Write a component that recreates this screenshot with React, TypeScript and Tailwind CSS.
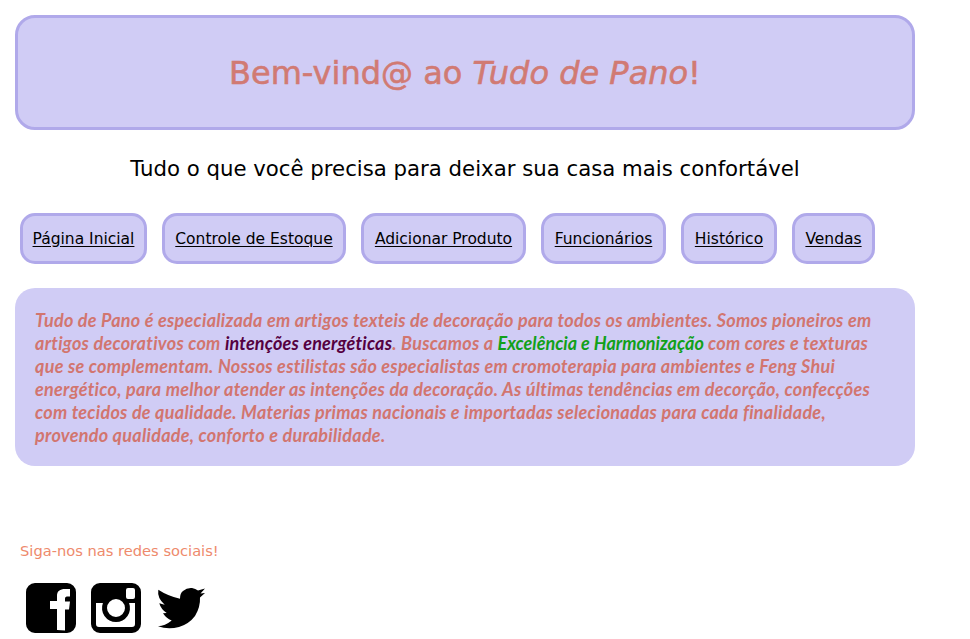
import React from "react";

const links = [
  { label: "Página Inicial", width: "w-[127px]" },
  { label: "Controle de Estoque", width: "w-[184px]" },
  { label: "Adicionar Produto", width: "w-[165px]" },
  { label: "Funcionários", width: "w-[125px]" },
  { label: "Histórico", width: "w-[96px]" },
  { label: "Vendas", width: "w-[83px]" },
];

const FacebookIcon = () => (
  <svg viewBox="0 0 50 50" className="w-[50px] h-[50px]">
    <path
      fillRule="evenodd"
      d="M9 0h32a9 9 0 0 1 9 9v32a9 9 0 0 1-9 9H9a9 9 0 0 1-9-9V9a9 9 0 0 1 9-9zM31 47V26h-7v-8h7v-5c0-5 3-7 8-7h5v7.500h-3c-1.500 0-2 1-2 2.500v2.500h5l-1 8h-4v21z"
    />
  </svg>
);

const InstagramIcon = () => (
  <svg viewBox="0 0 50 50" className="w-[50px] h-[50px]">
    <path
      fillRule="evenodd"
      d="M9 0h32a9 9 0 0 1 9 9v32a9 9 0 0 1-9 9H9a9 9 0 0 1-9-9V9a9 9 0 0 1 9-9zM37 5h5a2 2 0 0 1 2 2v7a2 2 0 0 1-2 2h-5a2 2 0 0 1-2-2V7a2 2 0 0 1 2-2zM5 20v21a3 3 0 0 0 3 3h33a3 3 0 0 0 3-3V20h-5.920A14 14 0 1 1 11.920 20zM25 16a9 9 0 1 0 0 18 9 9 0 1 0 0-18z"
    />
  </svg>
);

const TwitterIcon = () => (
  <svg viewBox="0 0 50 50" className="w-[50px] h-[50px]">
    <path d="M2.300 6.700Q12 13 24 15.700Q24 10 27 8Q31 4.500 36 5Q39.500 5.500 42 7.500L49 5.500L44.500 10.500L49 10L44 14.500Q44.500 24 39 33Q33 41 23 44Q12 47 2 43.300Q9 43 15.700 37.500Q10 35 7 30.200L10.700 30Q5 26.500 3.300 20.300L8.700 21.700Q1 15 2.300 6.700Z" />
  </svg>
);

export default function App() {
  return (
    <div className="bg-white min-h-[639px] overflow-hidden pt-[15px] pl-[15px] w-[915px] font-['DejaVu_Sans',sans-serif]">
      {/* HEADER */}
      <header className="h-[115px] flex items-center justify-center bg-[#d0ccf5] border-[3px] border-[#b0a9ea] rounded-[20px]">
        <h1 className="text-[32px] font-normal text-[#d17a73] [-webkit-text-stroke:0.6px_#d17a73]">
          Bem-vind@ ao <em>Tudo de Pano</em>!
        </h1>
      </header>

      {/* SUBTITLE */}
      <p className="mt-[25px] text-center text-[21.25px] leading-[28px] text-black">
        Tudo o que você precisa para deixar sua casa mais confortável
      </p>

      {/* NAV */}
      <nav className="mt-[30px] pl-[5px] flex gap-[15px]">
        {links.map((link) => (
          <a
            key={link.label}
            href="#"
            className={`${link.width} h-[51px] flex items-center justify-center pt-[2px] bg-[#d0ccf5] border-[3px] border-[#b0a9ea] rounded-[15px] text-[15.500px] text-black underline underline-offset-2`}
          >
            {link.label}
          </a>
        ))}
      </nav>

      {/* ABOUT */}
      <section className="mt-[24px] h-[178px] px-[20px] pt-[21px] bg-[#d0ccf5] rounded-[20px] font-['Lato',sans-serif] font-bold italic text-[18px] tracking-[0.27px] leading-[23px] text-[#d2756f]">
        Tudo de Pano é especializada em artigos texteis de decoração para todos os ambientes. Somos pioneiros em artigos decorativos com{" "}
        <span className="text-[#550040] tracking-[0.2px]">intenções energéticas</span>. Buscamos a{" "}
        <span className="text-[#12a01a] tracking-normal">Excelência e Harmonização</span> com cores e texturas que se complementam. Nossos estilistas são especialistas em cromoterapia para ambientes e Feng Shui energético, para melhor atender as intenções da decoração. As últimas tendências em decorção, confecções com tecidos de qualidade. Materias primas nacionais e importadas selecionadas para cada finalidade, provendo qualidade, conforto e durabilidade.
      </section>

      {/* SOCIAL */}
      <footer className="mt-[76px] pl-[5px]">
        <p className="text-[14.670px] leading-[18px] text-[#ee8a6c]">Siga-nos nas redes sociais!</p>
        <div className="mt-[23px] pl-[6px] flex gap-[15px]">
          <FacebookIcon />
          <InstagramIcon />
          <TwitterIcon />
        </div>
      </footer>
    </div>
  );
}
